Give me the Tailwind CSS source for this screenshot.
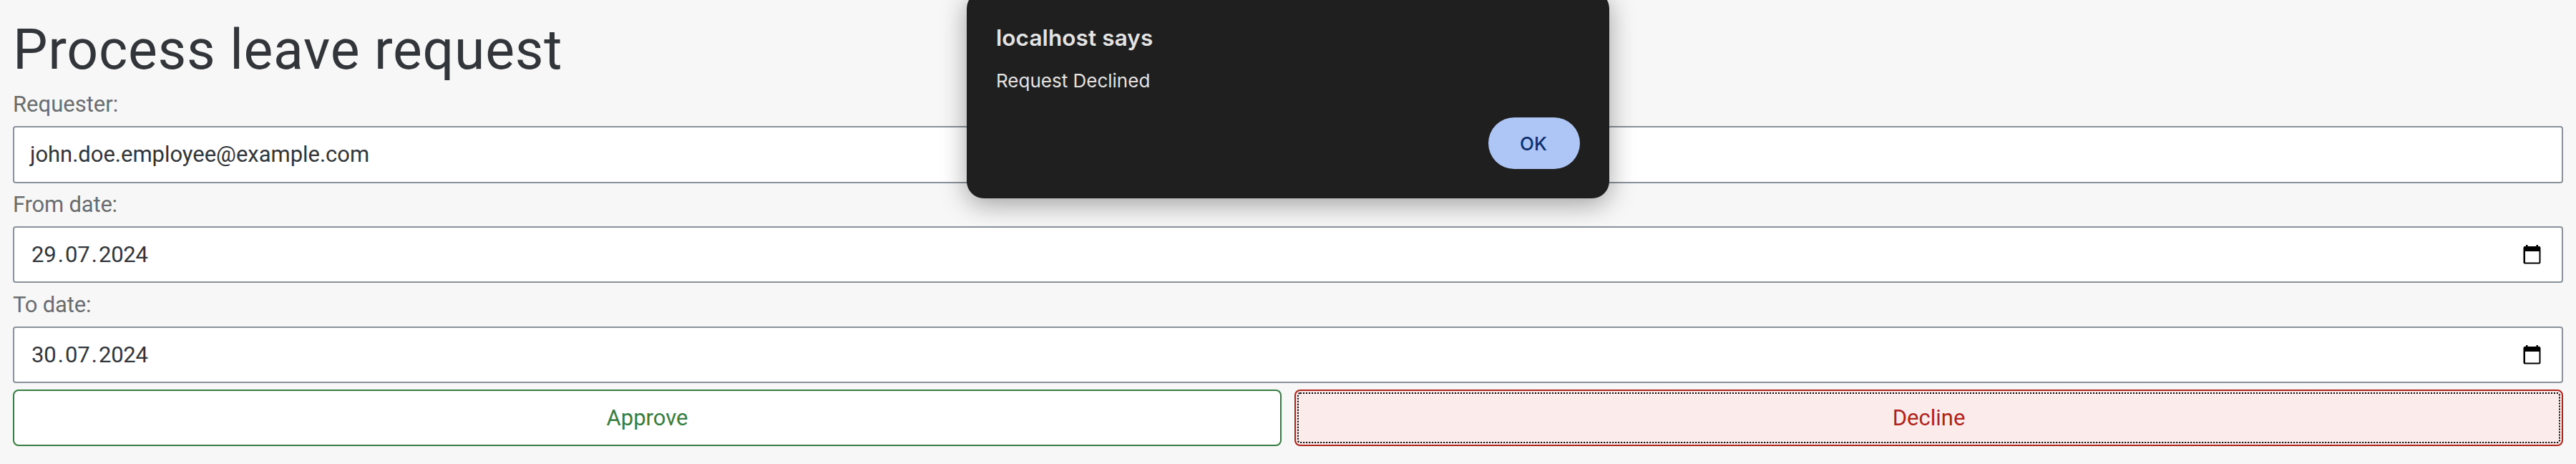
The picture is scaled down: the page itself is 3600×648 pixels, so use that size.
<!DOCTYPE html>
<html lang="en">
<head>
<meta charset="utf-8">
<title>Process leave request</title>
<script src="https://cdn.jsdelivr.net/npm/@tailwindcss/browser@4"></script>
</head>
<body class="relative h-[648px] w-[3600px] overflow-hidden bg-[#f7f7f7] font-[Roboto,sans-serif] text-[31px] text-[#32363a]">
<main class="flex flex-col px-[18px]">
  <h1 class="h-[125px] pt-4 text-[77px] leading-[108px] tracking-[0.7px]">Process leave request</h1>
  <label class="h-[51px] pt-px leading-[40px] text-[#6a6d70]">Requester:</label>
  <div class="flex h-20 items-center rounded-[4px] border-2 border-[#89919a] bg-white px-[22px] tracking-[-0.03px]">john.doe.employee@example.com</div>
  <label class="h-[60px] pt-[10px] leading-[40px] tracking-[-0.2px] text-[#6a6d70]">From date:</label>
  <div class="flex h-[79px] items-center justify-between rounded-[4px] border-2 border-[#89919a] bg-white pr-[29px] pl-[24px]">
    <div class="flex pt-px tracking-[-0.2px]"><span>29</span><span class="w-[12.5px] text-center">.</span><span>07</span><span class="w-[12.5px] text-center">.</span><span>2024</span></div>
    <svg class="mb-0.5 h-7 w-[25px]" viewBox="0 0 25 28"><path fill="#000" fill-rule="evenodd" d="M4 1h2.5v2h12V1H21v2h1.500a2 2 0 0 1 2 2v20.500a2 2 0 0 1-2 2h-20a2 2 0 0 1-2-2V5a2 2 0 0 1 2-2H4zM3 10v15.500h19.500V10z"/></svg>
  </div>
  <label class="h-[61px] pt-[11px] leading-[40px] tracking-[-0.2px] text-[#6a6d70]">To date:</label>
  <div class="flex h-[79px] items-center justify-between rounded-[4px] border-2 border-[#89919a] bg-white pr-[29px] pl-[24px]">
    <div class="flex pt-px tracking-[-0.2px]"><span>30</span><span class="w-[12.5px] text-center">.</span><span>07</span><span class="w-[12.5px] text-center">.</span><span>2024</span></div>
    <svg class="mb-0.5 h-7 w-[25px]" viewBox="0 0 25 28"><path fill="#000" fill-rule="evenodd" d="M4 1h2.5v2h12V1H21v2h1.500a2 2 0 0 1 2 2v20.500a2 2 0 0 1-2 2h-20a2 2 0 0 1-2-2V5a2 2 0 0 1 2-2H4zM3 10v15.500h19.500V10z"/></svg>
  </div>
  <div class="mt-[9px] grid grid-cols-2 gap-[18px]">
    <button class="h-[79px] rounded-[8px] border-2 border-[#367d42] bg-white pt-0.5 text-[#367d42]">Approve</button>
    <button class="h-[79px] rounded-[8px] border-2 border-[#b02318] bg-[#fcebeb] p-[2px] text-[#b02318]"><span class="flex h-full items-center justify-center rounded-[4px] border-2 border-dotted border-black pt-0.5">Decline</span></button>
  </div>
</main>
<div role="dialog" class="absolute -top-3 left-[1351px] flex h-[289px] w-[898px] flex-col rounded-[24px] bg-[#1f1f1f] px-[41px] pt-[44px] font-[Inter,sans-serif] text-[#e3e3e3] shadow-[0_8px_36px_rgba(0,0,0,0.36)]">
  <h2 class="text-[31.5px] leading-[42px] font-semibold tracking-[0.1px]">localhost says</h2>
  <p class="mt-[19px] text-[26px] leading-[40px]">Request Declined</p>
  <button class="mt-[31px] flex h-[72px] w-32 items-center justify-center self-end rounded-full bg-[#adc6f6] pr-0.5 text-[26px] font-medium text-[#0e2e6e]">OK</button>
</div>
</body>
</html>
